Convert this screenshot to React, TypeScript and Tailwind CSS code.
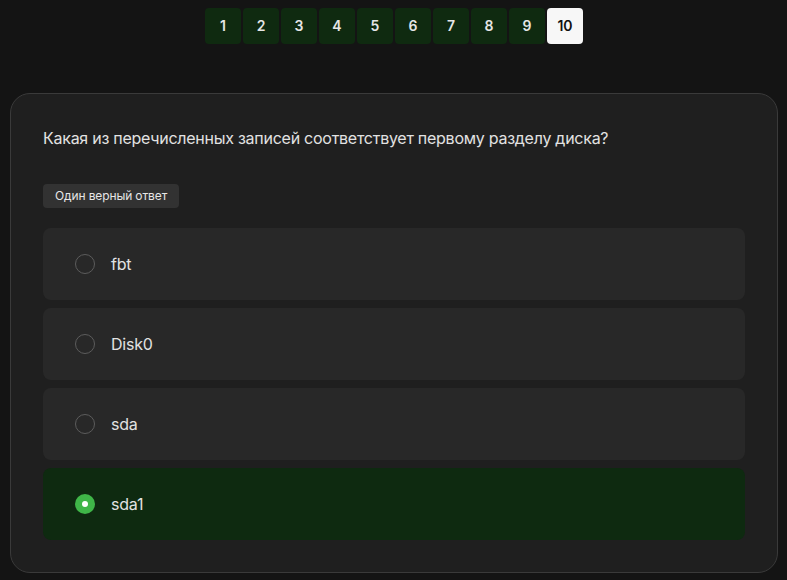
import { useState } from "react";

const options = ["fbt", "Disk0", "sda", "sda1"];

export default function App() {
  const [current, setCurrent] = useState(10);
  const [selected, setSelected] = useState(3);

  return (
    <div
      className="min-h-[580px] bg-[#141414] pl-[10px] pr-[9px] pt-2 pb-2"
      style={{ fontFamily: "Inter, 'Noto Sans', sans-serif" }}
    >
      {/* Pagination */}
      <div className="flex justify-center gap-[2px]">
        {Array.from({ length: 10 }, (_, i) => i + 1).map((n) => (
          <button
            key={n}
            onClick={() => setCurrent(n)}
            className={
              n === current
                ? "w-9 h-9 rounded-[4px] bg-[#f7f7f7] text-[#111] text-sm font-semibold"
                : "w-9 h-9 rounded-[4px] bg-[#0f2a10] text-[#e6e6e6] text-sm font-semibold"
            }
          >
            {n}
          </button>
        ))}
      </div>

      {/* Question card */}
      <div className="mt-[49px] rounded-[20px] border border-[#3a3a3a] bg-[#1f1f1f] p-8">
        <p className="text-base leading-6 tracking-[-0.26px] text-[#e2e2e2]">
          Какая из перечисленных записей соответствует первому разделу диска?
        </p>

        <div className="mt-[34px] inline-flex h-6 items-center rounded-[4px] bg-[#323232] px-3 text-xs tracking-[-0.12px] text-[#e6e6e6]">
          Один верный ответ
        </div>

        <div className="mt-5 flex flex-col gap-2">
          {options.map((opt, i) => (
            <button
              key={opt}
              onClick={() => setSelected(i)}
              className={
                i === selected
                  ? "flex h-[72px] items-center gap-4 rounded-lg bg-[#0e2a10] px-8 text-left"
                  : "flex h-[72px] items-center gap-4 rounded-lg bg-[#282828] px-8 text-left"
              }
            >
              {i === selected ? (
                <span className="flex h-5 w-5 items-center justify-center rounded-full bg-[#3fb648]">
                  <span className="h-[6px] w-[6px] rounded-full bg-white" />
                </span>
              ) : (
                <span className="h-5 w-5 rounded-full border border-[#5c5c5c]" />
              )}
              <span className="text-base leading-5 tracking-[-0.2px] text-[#e2e2e2]">{opt}</span>
            </button>
          ))}
        </div>
      </div>
    </div>
  );
}
